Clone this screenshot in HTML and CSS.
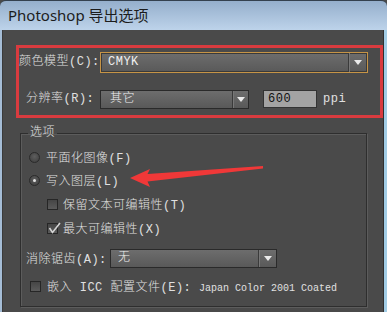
FILE: index.html
```html
<!DOCTYPE html>
<html lang="zh-CN">
<head>
    <meta charset="UTF-8">
    <title>Photoshop 导出选项</title>
    <link rel="stylesheet" href="styles.css">
</head>
<body>
    <div class="window">
        <!-- Barra de título -->
        <div class="titlebar">Photoshop 导出选项</div>

        <div class="client">
            <!-- Recuadro rojo -->
            <div class="marked">
                <div class="row row-mode">
                    <label class="lbl">颜色模型(C):</label>
                    <div class="select select-focus select-mode">
                        <span class="value">CMYK</span>
                        <span class="drop"><i class="tri"></i></span>
                    </div>
                </div>
                <div class="row row-res">
                    <label class="lbl">分辨率(R):</label>
                    <div class="select select-res">
                        <span class="value">其它</span>
                        <span class="drop"><i class="tri"></i></span>
                    </div>
                    <div class="field">600</div>
                    <span class="unit">ppi</span>
                </div>
            </div>

            <!-- Opciones -->
            <fieldset class="options">
                <legend>选项</legend>
                <div class="opt opt-radio">
                    <span class="radio"></span>
                    <span>平面化图像(F)</span>
                </div>
                <div class="opt opt-radio opt-second">
                    <span class="radio on"></span>
                    <span>写入图层(L)</span>
                </div>
                <div class="opt opt-sub">
                    <span class="check"></span>
                    <span>保留文本可编辑性(T)</span>
                </div>
                <div class="opt opt-sub opt-last-sub">
                    <span class="check on">
                        <svg width="13" height="13" viewBox="0 0 13 13"><path d="M1.5 6 L4.5 10.5 L12 1" fill="none" stroke="#d4d4d4" stroke-width="1.6"/></svg>
                    </span>
                    <span>最大可编辑性(X)</span>
                </div>
                <div class="opt opt-aa">
                    <label class="lbl-aa">消除锯齿(A):</label>
                    <div class="select select-aa">
                        <span class="value">无</span>
                        <span class="drop"><i class="tri"></i></span>
                    </div>
                </div>
                <div class="opt opt-icc">
                    <span class="check"></span>
                    <span>嵌入 ICC 配置文件(E): <span class="profile">Japan Color 2001 Coated</span></span>
                </div>
            </fieldset>
        </div>

        <!-- Flecha roja -->
        <svg class="arrow" width="387" height="312" viewBox="0 0 387 312">
            <path d="M130 178 L150 169 L147.5 174 L263 166 L263 168.5 L147.5 181.5 L150 187 Z" fill="#f03838"/>
        </svg>
    </div>
</body>
</html>
```

FILE: styles.css
```css
/* Ventana */
body {
    margin: 0;
    background: #4a4a4a;
}

.window {
    position: relative;
    width: 387px;
    height: 312px;
    overflow: hidden;
    display: flex;
    flex-direction: column;
    font-family: "Liberation Mono", "Noto Sans CJK SC", monospace;
    font-size: 12px;
    font-weight: 300;
    letter-spacing: 0.5px;
    color: #e0e0e0;
}

.titlebar {
    height: 30px;
    box-sizing: border-box;
    border-top: 1px solid #34414f;
    border-radius: 6px 6px 0 0;
    background: linear-gradient(#95afcc, #bdd3ea);
    padding-left: 8px;
    font-family: "Noto Sans", "Noto Sans CJK SC", sans-serif;
    font-size: 15px;
    font-weight: 400;
    letter-spacing: 0;
    line-height: 29px;
    color: #1c1c1c;
}

.client {
    flex: 1;
    background: #4a4a4a;
    border-left: 2px solid #a5bdd6;
    border-right: 3px solid #a2cde6;
    box-shadow: inset 1px 0 0 #3a3a3a, inset -1px 0 0 #303030;
    display: flex;
    flex-direction: column;
}

/* Recuadro rojo */
.marked {
    margin: 15px 1px 0 14px;
    border: 3px solid #d93b3f;
    padding: 4px 0 6px 0;
    display: flex;
    flex-direction: column;
    gap: 17px;
}

.row {
    display: flex;
    align-items: flex-start;
}

.lbl {
    width: 81px;
    box-sizing: border-box;
    line-height: 21px;
}

.row-res .lbl {
    padding-left: 7px;
    line-height: 19px;
}

/* Listas desplegables */
.select {
    display: flex;
    box-sizing: border-box;
    border: 1px solid #2a2a2a;
    background: linear-gradient(#6d6d6d, #595959);
    color: #f0f0f0;
}

.select .value {
    flex: 1;
    padding-left: 7px;
}

.select .drop {
    width: 17px;
    border-left: 1px solid #3a3a3a;
    box-shadow: inset 1px 0 0 #777;
    display: flex;
    align-items: center;
    justify-content: center;
}

.tri {
    width: 0;
    height: 0;
    border-left: 4px solid transparent;
    border-right: 4px solid transparent;
    border-top: 5px solid #eaeaea;
}

.select-focus {
    border-color: #c69446;
    box-shadow: inset 0 0 0 1px #3a3a3a;
}

.select-mode {
    width: 268px;
    height: 21px;
    line-height: 19px;
}

.select-mode .drop {
    width: 18px;
}

.select-res {
    width: 149px;
    height: 19px;
    line-height: 17px;
}

.select-res .value {
    padding-left: 9px;
}

.select-res .drop {
    width: 15px;
}

.field {
    margin-left: 14px;
    width: 54px;
    height: 18px;
    box-sizing: border-box;
    border: 1px solid #333;
    background: #a3a3a3;
    color: #111;
    padding-left: 4px;
    line-height: 16px;
}

.unit {
    margin-left: 6px;
    line-height: 19px;
}

/* Grupo de opciones */
.options {
    margin: 8px 17px 0 18px;
    padding: 7px 0 10px 0;
    border: 1px solid #2e2e2e;
    box-shadow: inset 1px 1px 0 #5c5c5c, 1px 1px 0 #5c5c5c;
    min-width: 0;
}

.options legend {
    margin-left: 7px;
    padding: 0 2px;
    line-height: 14px;
}

.opt {
    display: flex;
    align-items: center;
    height: 20px;
}

.opt-radio {
    margin-left: 8px;
    margin-bottom: 3px;
    gap: 6px;
}

.opt-second {
    margin-bottom: 4px;
}

.opt-sub {
    margin-left: 26px;
    margin-bottom: 4px;
    gap: 5px;
}

.opt-last-sub {
    margin-bottom: 10px;
}

.opt-aa {
    margin-left: 5px;
    margin-bottom: 8px;
}

.opt-icc {
    margin-left: 9px;
    gap: 6px;
}

.radio {
    width: 11px;
    height: 11px;
    box-sizing: border-box;
    border: 1px solid #2a2a2a;
    border-radius: 50%;
    background: radial-gradient(circle at 50% 40%, #5e5e5e, #3c3c3c);
    display: flex;
    align-items: center;
    justify-content: center;
}

.radio.on::after {
    content: "";
    width: 3px;
    height: 3px;
    border-radius: 50%;
    background: #e2e2e2;
}

.check {
    position: relative;
    width: 11px;
    height: 11px;
    box-sizing: border-box;
    border: 1px solid #262626;
    background: linear-gradient(#454545, #5b5b5b);
    flex-shrink: 0;
}

.check svg {
    position: absolute;
    left: 0;
    top: -2px;
}

.lbl-aa {
    width: 84px;
}

.select-aa {
    width: 167px;
    height: 19px;
    line-height: 17px;
}

.profile {
    font-size: 10px;
    letter-spacing: 0;
}

/* Flecha */
.arrow {
    position: absolute;
    left: 0;
    top: 0;
    pointer-events: none;
}
```
